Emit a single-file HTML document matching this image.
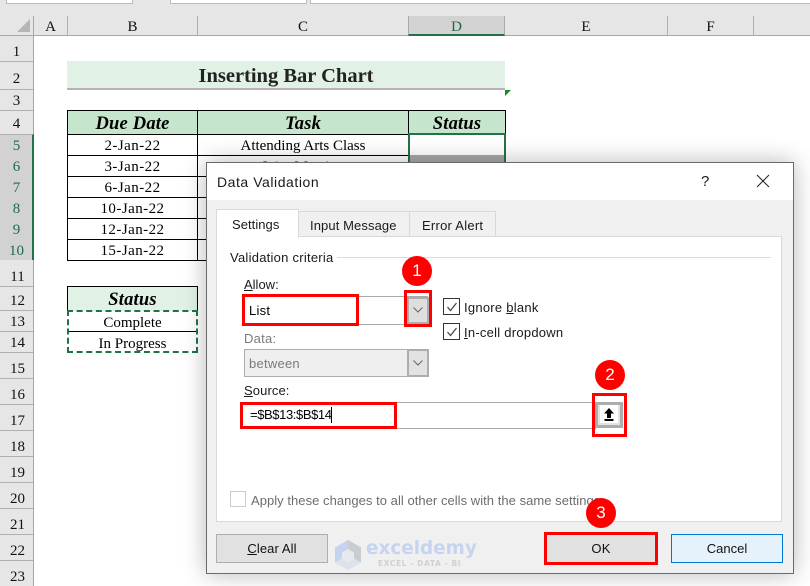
<!DOCTYPE html>
<html><head><meta charset="utf-8">
<style>
html,body{margin:0;padding:0;width:810px;height:586px;overflow:hidden;background:#fff}
#p{position:relative;width:810px;height:586px;overflow:hidden;background:#fff}
#p div{position:absolute;box-sizing:border-box}
.t{white-space:nowrap;font-family:"Liberation Sans",sans-serif;font-size:13px;line-height:20px;color:#1a1a1a;letter-spacing:.25px}
.s{white-space:nowrap;font-family:"Liberation Serif",serif;font-size:15px;text-align:center;color:#000;line-height:21px;margin-top:1px}
.d{letter-spacing:.45px}
.h{white-space:nowrap;font-family:"Liberation Serif",serif;font-size:15px;text-align:center;color:#111;line-height:20px;margin-top:1px}
.si{white-space:nowrap;font-family:"Liberation Serif",serif;font-size:18.5px;letter-spacing:.2px;font-weight:bold;font-style:italic;text-align:center;color:#000;line-height:24px;margin-top:1px}
.rb{border:3px solid #f00}
.c{width:30px;height:30px;border-radius:50%;background:#f00;color:#fff;text-align:center;font:17px/30px "Liberation Sans",sans-serif}
.k{background:#fff;border:1px solid #333;width:17px;height:17px}
.k svg{position:absolute;left:2px;top:2px}
</style></head><body><div id="p">

<!-- top strip -->
<div style="left:0;top:0;width:810px;height:35px;background:#e6e6e6"></div>
<div style="left:6px;top:0;width:127px;height:4px;background:#fff;border:1px solid #bbb;border-top:0"></div>
<div style="left:170px;top:0;width:137px;height:4px;background:#fff;border:1px solid #bbb;border-top:0"></div>
<div style="left:310px;top:0;width:500px;height:4px;background:#fff;border:1px solid #bbb;border-top:0;border-right:0"></div>
<div style="left:0;top:35px;width:810px;height:1px;background:#a8a8a8"></div>
<div style="left:0;top:36px;width:33px;height:550px;background:#e6e6e6"></div>
<div style="left:33px;top:16px;width:1px;height:570px;background:#a8a8a8"></div>
<svg style="position:absolute;left:17px;top:19px" width="14" height="14"><path d="M13 0V13H0Z" fill="#b5b5b5"/></svg>

<!-- column headers -->
<div style="left:67px;top:16px;width:1px;height:19px;background:#b0b0b0"></div>
<div style="left:197px;top:16px;width:1px;height:19px;background:#b0b0b0"></div>
<div style="left:408px;top:16px;width:97px;height:20px;background:#d2d2d2;border-left:1px solid #aaa;border-right:1px solid #aaa;border-bottom:2px solid #217346"></div>
<div style="left:667px;top:16px;width:1px;height:19px;background:#b0b0b0"></div>
<div style="left:753px;top:16px;width:1px;height:19px;background:#b0b0b0"></div>
<div class="h" style="left:34px;top:16px;width:33px">A</div>
<div class="h" style="left:68px;top:16px;width:129px">B</div>
<div class="h" style="left:198px;top:16px;width:210px">C</div>
<div class="h" style="left:408px;top:16px;width:97px;color:#1f6b47">D</div>
<div class="h" style="left:505px;top:16px;width:162px">E</div>
<div class="h" style="left:668px;top:16px;width:85px">F</div>

<!-- row headers -->
<div style="left:0;top:134px;width:33px;height:126px;background:#d2d2d2"></div>
<div style="left:32px;top:134px;width:2px;height:126px;background:#217346"></div>
<div style="left:0;top:61px;width:33px;height:1px;background:#b0b0b0"></div>
<div style="left:0;top:89px;width:33px;height:1px;background:#b0b0b0"></div>
<div style="left:0;top:110px;width:33px;height:1px;background:#b0b0b0"></div>
<div style="left:0;top:134px;width:33px;height:1px;background:#b0b0b0"></div>
<div style="left:0;top:286px;width:33px;height:1px;background:#b0b0b0"></div>
<div style="left:0;top:310px;width:33px;height:1px;background:#b0b0b0"></div>
<div style="left:0;top:331px;width:33px;height:1px;background:#b0b0b0"></div>
<div style="left:0;top:352px;width:33px;height:1px;background:#b0b0b0"></div>
<div style="left:0;top:378px;width:33px;height:1px;background:#b0b0b0"></div>
<div style="left:0;top:404px;width:33px;height:1px;background:#b0b0b0"></div>
<div style="left:0;top:430px;width:33px;height:1px;background:#b0b0b0"></div>
<div style="left:0;top:456px;width:33px;height:1px;background:#b0b0b0"></div>
<div style="left:0;top:482px;width:33px;height:1px;background:#b0b0b0"></div>
<div style="left:0;top:508px;width:33px;height:1px;background:#b0b0b0"></div>
<div style="left:0;top:534px;width:33px;height:1px;background:#b0b0b0"></div>
<div style="left:0;top:560px;width:33px;height:1px;background:#b0b0b0"></div>
<div class="h" style="left:0;top:41px;width:33px">1</div>
<div class="h" style="left:0;top:68px;width:33px">2</div>
<div class="h" style="left:0;top:90px;width:33px">3</div>
<div class="h" style="left:0;top:113px;width:33px">4</div>
<div class="h" style="left:0;top:135px;width:33px;color:#1f6b47">5</div>
<div class="h" style="left:0;top:156px;width:33px;color:#1f6b47">6</div>
<div class="h" style="left:0;top:177px;width:33px;color:#1f6b47">7</div>
<div class="h" style="left:0;top:198px;width:33px;color:#1f6b47">8</div>
<div class="h" style="left:0;top:219px;width:33px;color:#1f6b47">9</div>
<div class="h" style="left:0;top:240px;width:33px;color:#1f6b47">10</div>
<div class="h" style="left:1px;top:266px;width:33px">11</div>
<div class="h" style="left:1px;top:290px;width:33px">12</div>
<div class="h" style="left:1px;top:311px;width:33px">13</div>
<div class="h" style="left:1px;top:332px;width:33px">14</div>
<div class="h" style="left:1px;top:358px;width:33px">15</div>
<div class="h" style="left:1px;top:384px;width:33px">16</div>
<div class="h" style="left:1px;top:410px;width:33px">17</div>
<div class="h" style="left:1px;top:436px;width:33px">18</div>
<div class="h" style="left:1px;top:462px;width:33px">19</div>
<div class="h" style="left:1px;top:488px;width:33px">20</div>
<div class="h" style="left:1px;top:514px;width:33px">21</div>
<div class="h" style="left:1px;top:540px;width:33px">22</div>
<div class="h" style="left:1px;top:566px;width:33px">23</div>

<!-- title -->
<div style="left:67px;top:61px;width:438px;height:27px;background:#e2f1e6"></div>
<div style="left:67px;top:88px;width:438px;height:2px;background:#bdaebb"></div>
<div style="left:67px;top:61px;width:438px;height:27px;text-align:center;font:bold 20.5px/30px 'Liberation Serif',serif;color:#222;white-space:nowrap">Inserting Bar Chart</div>
<svg style="position:absolute;left:505px;top:90px" width="7" height="7"><path d="M0 0H6L0 6Z" fill="#1a8a1a"/></svg>

<!-- main table -->
<div style="left:67px;top:110px;width:438px;height:24px;background:#c6e5cd"></div>
<div style="left:67px;top:110px;width:439px;height:1px;background:#000"></div>
<div style="left:67px;top:134px;width:439px;height:1px;background:#000"></div>
<div style="left:67px;top:155px;width:342px;height:1px;background:#000"></div>
<div style="left:67px;top:176px;width:342px;height:1px;background:#000"></div>
<div style="left:67px;top:197px;width:342px;height:1px;background:#000"></div>
<div style="left:67px;top:218px;width:342px;height:1px;background:#000"></div>
<div style="left:67px;top:239px;width:342px;height:1px;background:#000"></div>
<div style="left:67px;top:260px;width:342px;height:1px;background:#000"></div>
<div style="left:67px;top:110px;width:1px;height:151px;background:#000"></div>
<div style="left:197px;top:110px;width:1px;height:151px;background:#000"></div>
<div style="left:408px;top:110px;width:1px;height:60px;background:#000"></div>
<div style="left:505px;top:110px;width:1px;height:24px;background:#000"></div>
<div class="si" style="left:68px;top:111px;width:129px">Due Date</div>
<div class="si" style="left:198px;top:111px;width:210px">Task</div>
<div class="si" style="left:409px;top:111px;width:96px">Status</div>
<div class="s d" style="left:68px;top:135px;width:129px">2-Jan-22</div>
<div class="s d" style="left:68px;top:156px;width:129px">3-Jan-22</div>
<div class="s d" style="left:68px;top:177px;width:129px">6-Jan-22</div>
<div class="s d" style="left:68px;top:198px;width:129px">10-Jan-22</div>
<div class="s d" style="left:68px;top:219px;width:129px">12-Jan-22</div>
<div class="s d" style="left:68px;top:240px;width:129px">15-Jan-22</div>
<div class="s" style="left:198px;top:135px;width:210px">Attending Arts Class</div>
<div class="s" style="left:198px;top:156px;width:210px">Joint Meeting</div>
<div style="left:410px;top:155px;width:94px;height:12px;background:#a8a8a8"></div>
<div style="left:408px;top:133px;width:98px;height:40px;border:2px solid #217346;border-bottom:0"></div>

<!-- status table -->
<div style="left:67px;top:286px;width:131px;height:25px;background:#e2f1e6;border:1px solid #000;border-bottom:0"></div>
<div class="si" style="left:68px;top:287px;width:129px">Status</div>
<div style="left:67px;top:331px;width:131px;height:1px;background:#000"></div>
<div style="left:67px;top:310px;width:131px;height:43px;border:2px dashed #217346"></div>
<div class="s" style="left:68px;top:312px;width:129px">Complete</div>
<div class="s" style="left:68px;top:333px;width:129px">In Progress</div>

<!-- dialog -->
<div style="left:206px;top:162px;width:588px;height:412px;background:#f0f0f0;border:1px solid #6b6b6b;box-shadow:0 0 22px rgba(0,0,0,.28)"></div>
<div style="left:207px;top:163px;width:586px;height:37px;background:#fff"></div>
<div class="t" style="left:217px;top:172px;font-size:14px;letter-spacing:.55px">Data Validation</div>
<div class="t" style="left:701px;top:172px;font-size:15px">?</div>
<svg style="position:absolute;left:756px;top:174px" width="14" height="14"><path d="M1 1L13 13M13 1L1 13" stroke="#222" stroke-width="1" fill="none"/></svg>

<!-- tabs -->
<div style="left:298px;top:211px;width:112px;height:26px;background:#f0f0f0;border:1px solid #d9d9d9;border-bottom:0"></div>
<div style="left:409px;top:211px;width:87px;height:26px;background:#f0f0f0;border:1px solid #d9d9d9;border-bottom:0"></div>
<div style="left:216px;top:236px;width:566px;height:286px;background:#fff;border:1px solid #d9d9d9"></div>
<div style="left:216px;top:209px;width:83px;height:29px;background:#fff;border:1px solid #d9d9d9;border-bottom:0"></div>
<div class="t" style="left:232px;top:215px;letter-spacing:.05px">Settings</div>
<div class="t" style="left:310px;top:216px;letter-spacing:.1px">Input Message</div>
<div class="t" style="left:422px;top:216px">Error Alert</div>

<!-- group -->
<div class="t" style="left:230px;top:248px">Validation criteria</div>
<div style="left:337px;top:257px;width:434px;height:1px;background:#dcdcdc"></div>
<div class="t" style="left:244px;top:275px;letter-spacing:0"><u>A</u>llow:</div>

<div style="left:244px;top:296px;width:184px;height:29px;background:#fff;border-top:1px solid #aaa;border-bottom:1px solid #aaa"></div>
<div style="left:407px;top:297px;width:22px;height:27px;background:#dedede;border:2px solid #adadad"></div>
<svg style="position:absolute;left:412px;top:306px" width="12" height="8"><path d="M1.5 1.5L6 6L10.5 1.5" stroke="#666" fill="none"/></svg>
<div class="t" style="left:249px;top:301px;color:#000">List</div>
<div class="t" style="left:244px;top:329px;color:#7a7a7a">Data:</div>
<div style="left:244px;top:349px;width:185px;height:28px;background:#efefef;border:1px solid #adadad;border-right:0"></div>
<div style="left:407px;top:349px;width:22px;height:28px;background:#e2e2e2;border:2px solid #adadad"></div>
<svg style="position:absolute;left:412px;top:359px" width="12" height="8"><path d="M1.5 1.5L6 6L10.5 1.5" stroke="#666" fill="none"/></svg>
<div class="t" style="left:249px;top:354px;color:#7a7a7a">between</div>
<div class="t" style="left:244px;top:381px;letter-spacing:.1px"><u>S</u>ource:</div>
<div style="left:244px;top:402px;width:352px;height:27px;background:#fff;border-top:1px solid #aaa;border-bottom:1px solid #aaa"></div>
<div class="t" style="left:250px;top:405px;color:#000;letter-spacing:-.4px">=$B$13:$B$14</div>
<div style="left:331px;top:407px;width:1px;height:16px;background:#000"></div>
<div style="left:595px;top:402px;width:28px;height:26px;background:#fff;border:3px solid #adadad"></div>
<div style="left:598px;top:405px;width:22px;height:20px;background:#fff;border-left:2px solid #e2e2e2;border-right:2px solid #e2e2e2;border-bottom:2px solid #e2e2e2"></div>
<svg style="position:absolute;left:602px;top:407px" width="14" height="15"><path d="M7 1L12 6.5H9V11H5V6.5H2Z" fill="#000"/><rect x="2.5" y="12" width="9" height="2" fill="#000"/></svg>

<!-- checkboxes -->
<div class="k" style="left:443px;top:298px"><svg width="12" height="12"><path d="M1.5 6L4.5 9.5L10.5 2" stroke="#444" stroke-width="1.2" fill="none"/></svg></div>
<div class="k" style="left:443px;top:323px"><svg width="12" height="12"><path d="M1.5 6L4.5 9.5L10.5 2" stroke="#444" stroke-width="1.2" fill="none"/></svg></div>
<div class="t" style="left:464px;top:298px">Ignore <u>b</u>lank</div>
<div class="t" style="left:464px;top:323px"><u>I</u>n-cell dropdown</div>
<div style="left:230px;top:491px;width:16px;height:16px;background:#fff;border:1px solid #ccc"></div>
<div class="t" style="left:251px;top:491px;color:#6d6d6d;letter-spacing:.04px">Apply these changes to all other cells with the same settings</div>

<!-- buttons -->
<div style="left:216px;top:534px;width:112px;height:29px;background:#e1e1e1;border:1px solid #adadad"></div>
<div class="t" style="left:216px;top:539px;width:112px;text-align:center;color:#111;letter-spacing:.1px"><u>C</u>lear All</div>
<div style="left:546px;top:534px;width:110px;height:29px;background:#e1e1e1;border:1px solid #0078d7"></div>
<div class="t" style="left:546px;top:539px;width:110px;text-align:center;color:#111">OK</div>
<div style="left:671px;top:534px;width:112px;height:29px;background:#e5f1fb;border:1px solid #0078d7"></div>
<div class="t" style="left:671px;top:539px;width:112px;text-align:center;color:#111;letter-spacing:0">Cancel</div>

<!-- watermark -->
<svg style="position:absolute;left:333px;top:539px" width="30" height="32"><path d="M15 1L28 8.5V23.5L15 31L2 23.5V8.5Z" fill="#c5d3ee"/><path d="M15 1L28 8.5V23.5L15 16Z" fill="#c9ccd0"/><path d="M2 23.5L15 16L28 23.5L15 31Z" fill="#dde3e8"/><path d="M15 10L21 13.5V20L15 23.5L9 20V13.5Z" fill="#e6eaee"/></svg>
<div style="left:366px;top:537px;white-space:nowrap;font:bold 18.4px/24px 'DejaVu Sans',sans-serif;color:#c5d4f0">exceldemy</div>
<div style="left:378px;top:559px;white-space:nowrap;font:bold 7.5px/10px 'DejaVu Sans',sans-serif;color:#cdd2d6;letter-spacing:.6px">EXCEL - DATA - BI</div>

<!-- annotations -->
<div class="rb" style="left:242px;top:294px;width:117px;height:32px"></div>
<div class="rb" style="left:404px;top:290px;width:28px;height:37px"></div>
<div class="rb" style="left:240px;top:402px;width:157px;height:27px"></div>
<div class="rb" style="left:592px;top:393px;width:35px;height:44px"></div>
<div class="rb" style="left:544px;top:532px;width:114px;height:33px"></div>
<div class="c" style="left:402px;top:256px">1</div>
<div class="c" style="left:595px;top:360px">2</div>
<div class="c" style="left:586px;top:498px">3</div>

</div></body></html>
